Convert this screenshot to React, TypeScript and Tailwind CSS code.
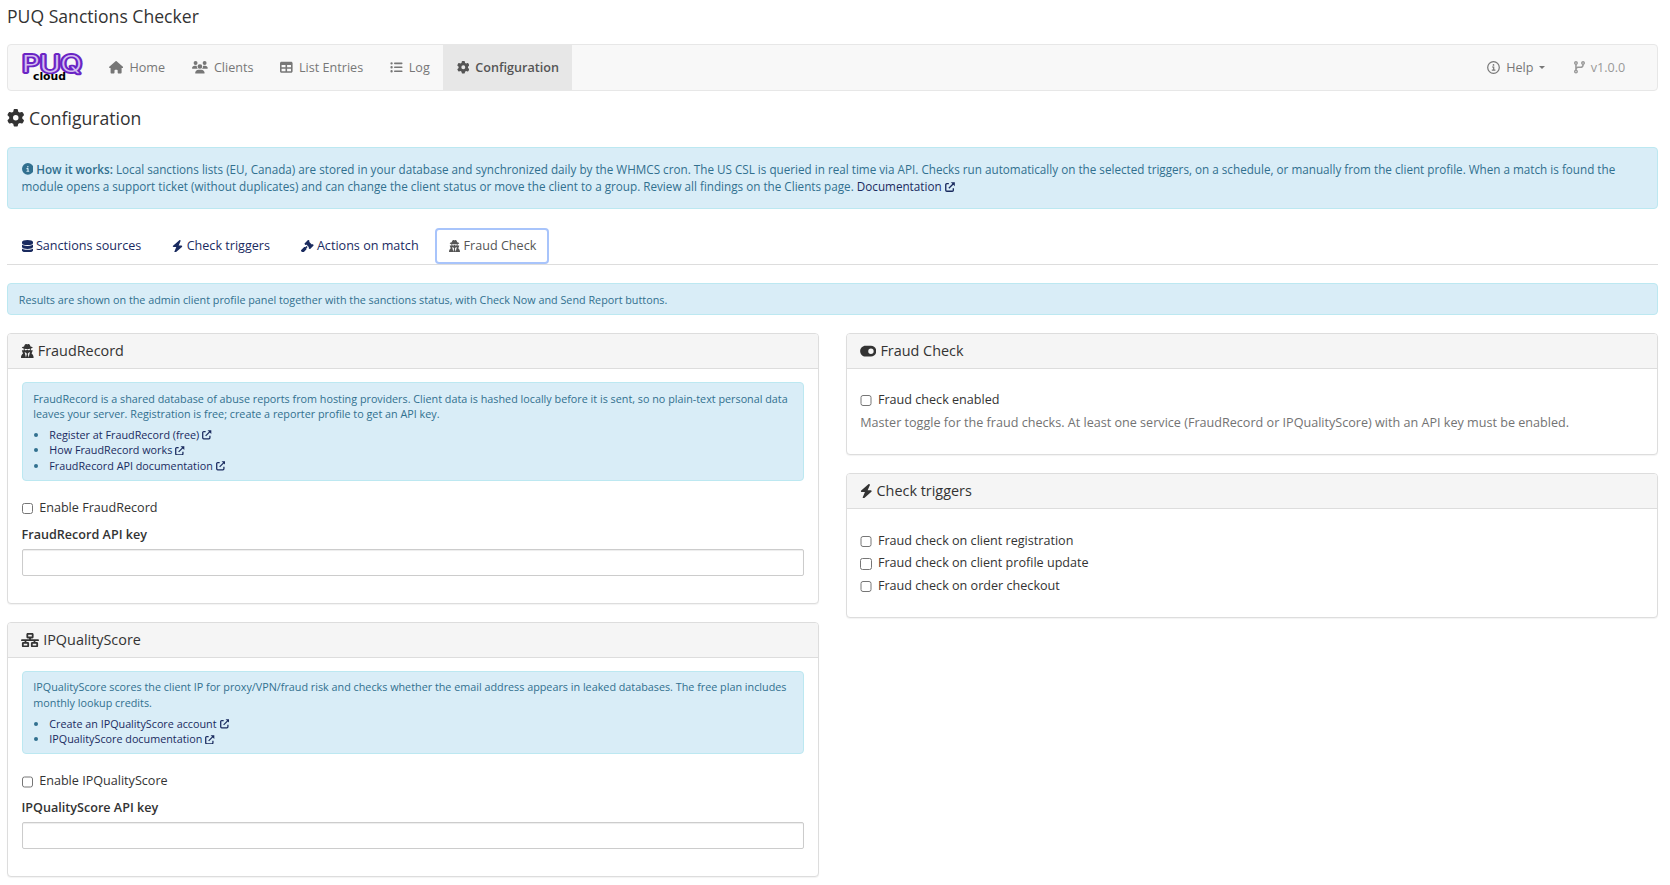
import type { ReactNode } from "react";
import {
  FaBolt,
  FaCircleInfo,
  FaCodeBranch,
  FaDatabase,
  FaGavel,
  FaGear,
  FaHouse,
  FaListUl,
  FaNetworkWired,
  FaTable,
  FaToggleOn,
  FaUserSecret,
  FaUsers,
} from "react-icons/fa6";

const Logo = () => (
  <svg width="60" height="29" viewBox="0 0 60 29" className="block overflow-visible">
    {/* wide purple stroke with a thin light line running through the letters */}
    <g
      strokeLinejoin="round"
      fill="none"
      className="font-['Inter',sans-serif] text-[22.5px] font-light"
    >
      <text x="0" y="19.3" textLength="60" lengthAdjust="spacingAndGlyphs" fill="#6a24c4" stroke="#6a24c4" strokeWidth="3.8">
        PUQ
      </text>
      <text x="0" y="19.3" textLength="60" lengthAdjust="spacingAndGlyphs" fill="#d3bdf0" aria-hidden="true">
        PUQ
      </text>
    </g>
    <text
      x="11"
      y="27.3"
      textLength="33"
      lengthAdjust="spacingAndGlyphs"
      fill="#000"
      className="font-['DejaVu_Sans',sans-serif] text-[10.5px] font-bold"
    >
      cloud
    </text>
  </svg>
);

const ExternalIcon = ({ className }: { className: string }) => (
  <svg viewBox="0 0 12 12" fill="none" stroke="currentColor" strokeWidth="1.6" className={className}>
    <path d="M4.6 2H2.2A1.3 1.3 0 0 0 .9 3.3v6.5a1.3 1.3 0 0 0 1.3 1.3h6.5a1.3 1.3 0 0 0 1.3-1.3V7.4" />
    <path d="M4.6 7.4 10.6 1.4" />
    <path d="M7 .2h4.8V5z" fill="currentColor" stroke="none" />
  </svg>
);

const NavItem = ({ icon, label, active }: { icon: ReactNode; label: string; active?: boolean }) => (
  <a
    href="#"
    className={
      active
        ? "flex items-center gap-[6px] bg-[#e7e7e7] pl-[13.5px] pr-[12.8px] font-semibold text-[#555]"
        : "flex items-center gap-[6px] px-[13.5px] text-[#777]"
    }
  >
    {icon}
    {label}
  </a>
);

const Tab = ({ icon, label }: { icon: ReactNode; label: string }) => (
  <a href="#" className="mr-[1.9px] flex h-9 items-center gap-[3.4px] px-[14.5px] text-[#1a2b5f]">
    {icon}
    {label}
  </a>
);

const Panel = ({ icon, title, children }: { icon: ReactNode; title: string; children: ReactNode }) => (
  <section className="mb-[18px] rounded-[4px] border border-[#ddd] bg-white shadow-[0_1px_1px_rgba(0,0,0,0.05)]">
    <h3 className="flex h-[35px] items-center gap-1 rounded-t-[3px] border-b border-[#ddd] bg-[#f5f5f5] px-[13.2px] text-[14.4px]">
      {icon}
      {title}
    </h3>
    <div className="pl-[13.5px] pr-[14.2px] pt-[13px]">{children}</div>
  </section>
);

const DocLink = ({ children }: { children: ReactNode }) => (
  <li className="flex items-center">
    <span className="ml-[1px] mr-[11px] size-1 rounded-full bg-[#31708f]" />
    <a href="#" className="flex items-center gap-[3px] text-[#1a2b5f]">
      {children}
      <ExternalIcon className="mt-[1px] size-[9.5px]" />
    </a>
  </li>
);

const Info = ({ text, children }: { text: string; children: ReactNode }) => (
  <div className="rounded-[4px] border border-[#bce8f1] bg-[#d9edf7] px-[10.8px] pb-[6.7px] pt-[7.6px] text-[10.79px] leading-[15.4px] text-[#31708f]">
    <p>{text}</p>
    <ul className="mt-[5.6px]">{children}</ul>
  </div>
);

const Check = ({ label }: { label: string }) => (
  <label className="flex h-[22.5px] items-center gap-[6px]">
    <input type="checkbox" className="mt-[1.2px] size-[11.7px]" />
    {label}
  </label>
);

const KeyField = ({ label }: { label: string }) => (
  <div>
    <label className="mt-[7px] block h-[18px] font-semibold leading-[18px]">{label}</label>
    <input
      type="text"
      className="mt-[4.8px] block h-[27px] w-full rounded-[2px] border border-[#ccc] px-2 shadow-[inset_0_1px_1px_rgba(0,0,0,0.075)]"
    />
  </div>
);

const App = () => {
  return (
    <div className="h-[885px] overflow-hidden bg-white pl-[7px] pr-[12px] font-['Open_Sans',sans-serif] text-[12.6px] leading-[18px] text-[#333]">
      <h1 className="pt-[4px] text-[17.6px] leading-6">PUQ Sanctions Checker</h1>

      <nav className="mt-[16px] flex h-[47px] rounded-[4px] border border-[#e7e7e7] bg-[#f8f8f8]">
        <a href="#" className="ml-[14px] mr-[13.8px] mt-[8px]">
          <Logo />
        </a>
        <NavItem icon={<FaHouse className="h-[12.6px] w-[14.2px]" />} label="Home" />
        <NavItem icon={<FaUsers className="h-[12.6px] w-[15.8px]" />} label="Clients" />
        <NavItem icon={<FaTable className="size-[12.6px]" />} label="List Entries" />
        <NavItem icon={<FaListUl className="size-[12.6px]" />} label="Log" />
        <NavItem icon={<FaGear className="size-[12.6px]" />} label="Configuration" active />
        <div className="ml-auto flex">
          <a href="#" className="flex items-center pl-[13.5px] pr-[15.7px] text-[#777]">
            <svg viewBox="0 0 26 26" className="mr-[6px] size-[13px]" fill="none" stroke="currentColor" strokeWidth="2.4">
              <circle cx="13" cy="13" r="11.6" />
              <path d="M10 12h3.4v6.4M9.6 18.4h7.2" />
              <circle cx="13" cy="7.8" r="1.7" fill="currentColor" stroke="none" />
            </svg>
            Help
            <span className="ml-[5px] border-x-[3.5px] border-t-[3.5px] border-x-transparent" />
          </a>
          <span className="mr-[18.3px] flex items-center gap-[6px] px-[13.5px] text-[#999]">
            <FaCodeBranch className="h-[12.6px] w-[11px]" />
            v1.0.0
          </span>
        </div>
      </nav>

      <h2 className="mt-[15px] flex h-6 items-center gap-[4.6px] text-[17.6px]">
        <FaGear className="size-[17.5px]" />
        Configuration
      </h2>

      <div className="mt-[17px] h-[62px] rounded-[4px] border border-[#bce8f1] bg-[#d9edf7] px-[13.5px] pt-[12.5px] text-[11.7px] leading-[17px] text-[#31708f]">
        <FaCircleInfo className="mr-[3px] inline size-[11.7px] align-[-1.5px]" />
        <b className="font-semibold">How it works:</b> Local sanctions lists (EU, Canada) are stored in your database and
        synchronized daily by the WHMCS cron. The US CSL is queried in real time via API. Checks run automatically on the
        selected triggers, on a schedule, or manually from the client profile. When a match is found the module opens a
        support ticket (without duplicates) and can change the client status or move the client to a group. Review all
        findings on the Clients page.{" "}
        <a href="#" className="text-[#1a2b5f]">
          Documentation <ExternalIcon className="inline size-[10px] align-[-1.5px]" />
        </a>
      </div>

      <div className="mt-[19px] flex h-[37px] border-b border-[#ddd]">
        <Tab icon={<FaDatabase className="h-[12.6px] w-[11px]" />} label="Sanctions sources" />
        <Tab icon={<FaBolt className="h-[12.6px] w-[11px]" />} label="Check triggers" />
        <Tab icon={<FaGavel className="size-[12.6px]" />} label="Actions on match" />
        <a
          href="#"
          className="flex h-9 items-center gap-[3.4px] rounded-[4px] border-2 border-[#a8c4fb] bg-white pl-[12.2px] pr-[10.9px] text-[#555]"
        >
          <FaUserSecret className="h-[12.6px] w-[11px]" />
          Fraud Check
        </a>
      </div>

      <div className="mt-[18px] flex h-8 items-center rounded-[4px] border border-[#bce8f1] bg-[#d9edf7] px-[10.8px] pt-[1px] text-[10.79px] text-[#31708f]">
        Results are shown on the admin client profile panel together with the sanctions status, with Check Now and Send
        Report buttons.
      </div>

      <div className="mt-[18px] grid grid-cols-2 gap-[26.5px]">
        <div>
          <Panel icon={<FaUserSecret className="h-[14.4px] w-[12.6px]" />} title="FraudRecord">
            <Info text="FraudRecord is a shared database of abuse reports from hosting providers. Client data is hashed locally before it is sent, so no plain-text personal data leaves your server. Registration is free; create a reporter profile to get an API key.">
              <DocLink>Register at FraudRecord (free)</DocLink>
              <DocLink>How FraudRecord works</DocLink>
              <DocLink>FraudRecord API documentation</DocLink>
            </Info>
            <div className="pb-[27px] pt-[15.6px]">
              <Check label="Enable FraudRecord" />
              <KeyField label="FraudRecord API key" />
            </div>
          </Panel>
          <Panel icon={<FaNetworkWired className="h-[14.4px] w-[18px]" />} title="IPQualityScore">
            <Info text="IPQualityScore scores the client IP for proxy/VPN/fraud risk and checks whether the email address appears in leaked databases. The free plan includes monthly lookup credits.">
              <DocLink>Create an IPQualityScore account</DocLink>
              <DocLink>IPQualityScore documentation</DocLink>
            </Info>
            <div className="pb-[27px] pt-[15.6px]">
              <Check label="Enable IPQualityScore" />
              <KeyField label="IPQualityScore API key" />
            </div>
          </Panel>
        </div>
        <div>
          <Panel icon={<FaToggleOn className="h-[14.4px] w-[16.5px]" />} title="Fraud Check">
            <div className="pb-[22px] pt-[6.5px]">
              <Check label="Fraud check enabled" />
              <p className="mt-[3px] text-[#737373]">
                Master toggle for the fraud checks. At least one service (FraudRecord or IPQualityScore) with an API key
                must be enabled.
              </p>
            </div>
          </Panel>
          <Panel icon={<FaBolt className="h-[14.4px] w-[12.6px]" />} title="Check triggers">
            <div className="pb-[20px] pt-[7.5px]">
              <Check label="Fraud check on client registration" />
              <Check label="Fraud check on client profile update" />
              <Check label="Fraud check on order checkout" />
            </div>
          </Panel>
        </div>
      </div>
    </div>
  );
};

export default App;
